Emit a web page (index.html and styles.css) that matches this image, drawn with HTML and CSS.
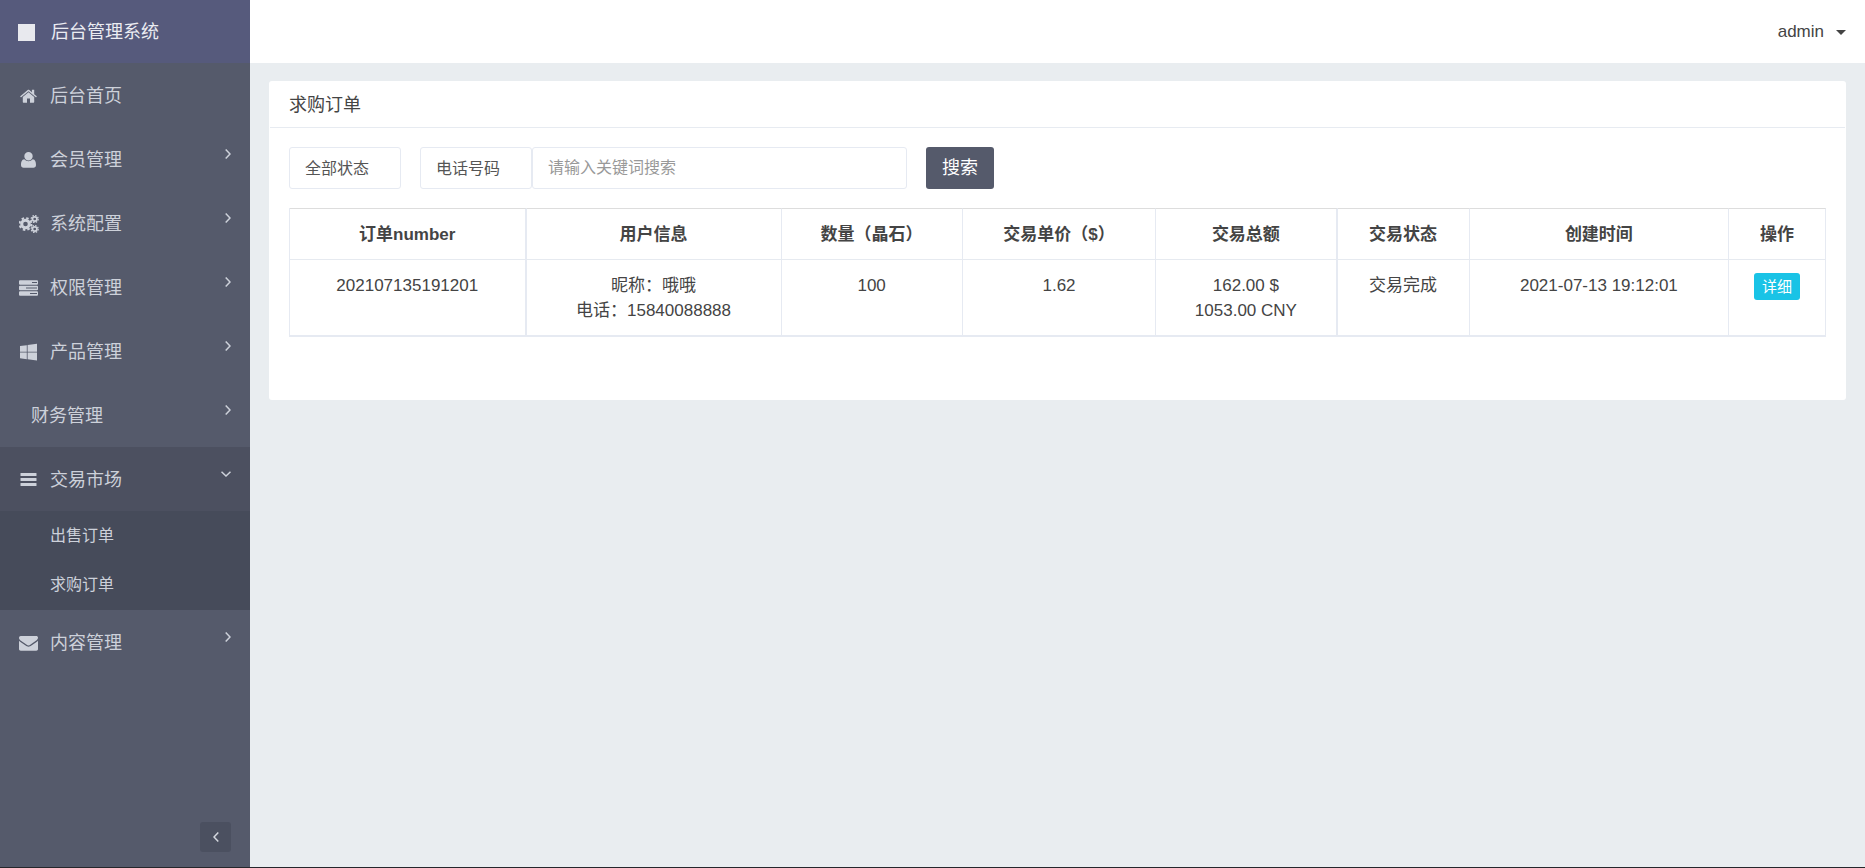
FILE: index.html
```html
<!DOCTYPE html>
<html lang="zh-CN">
<head>
<meta charset="utf-8">
<title>后台管理系统</title>
<link rel="stylesheet" href="styles.css">
</head>
<body>
<div class="app">
  <aside class="sidebar">
    <a class="brand" href="#"><span class="brand-mark"></span><span>后台管理系统</span></a>
    <nav class="nav">
      <a class="nav-item" href="#">
        <span class="nav-icon"><svg width="19" height="18" viewBox="0 0 19 18"><path d="M9.500 5.200 3.800 10v5.100c0 .3.300.6.600.6H8v-4.200h3v4.200h3.600c.3 0 .6-.3.6-.6V10z"/><path d="M17.700 9.300 15.200 7.200V3.100c0-.2-.1-.3-.3-.3h-1.700c-.2 0-.3.100-.3.300v2.100L10.300 3c-.4-.4-1.200-.4-1.600 0L1.300 9.300c-.1.100-.1.300 0 .4l.5.600c.1.100.3.100.4 0l7.300-6 7.300 6c.1.100.3.100.4 0l.5-.6c.1-.1.100-.3 0-.4z"/></svg></span>
        <span class="nav-text">后台首页</span>
      </a>
      <a class="nav-item" href="#">
        <span class="nav-icon"><svg width="19" height="18" viewBox="0 0 19 18"><path d="M9.500 1a4.200 4.200 0 0 1 4.200 4.200 4.200 4.200 0 0 1-8.400 0A4.200 4.200 0 0 1 9.500 1zM5.300 8.300A5.600 5.600 0 0 0 9.500 10.200a5.600 5.600 0 0 0 4.200-1.900c2.600.2 3.300 3 3.300 5.700 0 1.700-1.100 2.700-2.600 2.700H4.600C3.100 16.700 2 15.700 2 14c0-2.700.7-5.500 3.300-5.700z"/></svg></span>
        <span class="nav-text">会员管理</span>
        <svg class="chevron" width="6" height="10" viewBox="0 0 6 10"><path d="M.7.500 5 5 .7 9.500"/></svg>
      </a>
      <a class="nav-item" href="#">
        <span class="nav-icon"><svg class="gears" width="20" height="18" viewBox="0 0 20 18"><circle cx="6.500" cy="9" r="3.800" stroke-width="3"/><circle cx="6.500" cy="9" r="5.900" stroke-width="2" stroke-dasharray="2.500 2.134"/><circle cx="15.700" cy="4" r="2.200" stroke-width="1.700"/><circle cx="15.700" cy="4" r="3.500" stroke-width="1.200" stroke-dasharray="1.500 1.249"/><circle cx="15.700" cy="14" r="2.200" stroke-width="1.700"/><circle cx="15.700" cy="14" r="3.500" stroke-width="1.200" stroke-dasharray="1.500 1.249"/></svg></span>
        <span class="nav-text">系统配置</span>
        <svg class="chevron" width="6" height="10" viewBox="0 0 6 10"><path d="M.7.500 5 5 .7 9.500"/></svg>
      </a>
      <a class="nav-item" href="#">
        <span class="nav-icon"><svg width="19" height="18" viewBox="0 0 19 18"><path fill-rule="evenodd" d="M1 1.300h17a1 1 0 0 1 1 1v2.500a1 1 0 0 1-1 1H1a1 1 0 0 1-1-1V2.300a1 1 0 0 1 1-1zm12 1.700v1h5V3zM1 6.800h17a1 1 0 0 1 1 1v2.500a1 1 0 0 1-1 1H1a1 1 0 0 1-1-1V7.800a1 1 0 0 1 1-1zm6 1.700v1h11v-1zM1 12.300h17a1 1 0 0 1 1 1v2.500a1 1 0 0 1-1 1H1a1 1 0 0 1-1-1v-2.500a1 1 0 0 1 1-1zm10 1.700v1h7v-1z"/></svg></span>
        <span class="nav-text">权限管理</span>
        <svg class="chevron" width="6" height="10" viewBox="0 0 6 10"><path d="M.7.500 5 5 .7 9.500"/></svg>
      </a>
      <a class="nav-item" href="#">
        <span class="nav-icon"><svg width="19" height="18" viewBox="0 0 19 18"><path d="M1 3.100 7.800 2.200v6.600H1zM8.600 2.100 18 .8v8H8.600zM1 9.600h6.800v6.600L1 15.300zM8.600 9.600H18v8l-9.400-1.300z"/></svg></span>
        <span class="nav-text">产品管理</span>
        <svg class="chevron" width="6" height="10" viewBox="0 0 6 10"><path d="M.7.500 5 5 .7 9.500"/></svg>
      </a>
      <a class="nav-item" href="#">
        <span class="nav-icon nav-icon-empty"></span>
        <span class="nav-text">财务管理</span>
        <svg class="chevron" width="6" height="10" viewBox="0 0 6 10"><path d="M.7.500 5 5 .7 9.500"/></svg>
      </a>
      <a class="nav-item nav-item-open" href="#" aria-expanded="true">
        <span class="nav-icon"><svg width="19" height="18" viewBox="0 0 19 18"><rect x="1.500" y="2" width="16" height="3" rx=".6"/><rect x="1.500" y="7" width="16" height="3" rx=".6"/><rect x="1.500" y="12" width="16" height="3" rx=".6"/></svg></span>
        <span class="nav-text">交易市场</span>
        <svg class="chevron" width="10" height="6" viewBox="0 0 10 6"><path d="M.5.700 5 5 9.500.7"/></svg>
      </a>
      <div class="subnav">
        <a class="subnav-item" href="#">出售订单</a>
        <a class="subnav-item" href="#">求购订单</a>
      </div>
      <a class="nav-item" href="#">
        <span class="nav-icon"><svg width="19" height="18" viewBox="0 0 19 18"><path d="M1.700 2h15.600C18.200 2 19 2.700 19 3.700c0 1.100-.9 2.200-1.800 2.900l-5.600 3.900c-.7.500-1.400 1-2.100 1s-1.400-.5-2.100-1L1.900 6.700C1 6 0 4.900 0 3.900 0 2.800.7 2 1.700 2z"/><path d="M0 6.800c.3.400.7.700 1.100 1l5.500 3.700c.9.600 1.800 1.200 2.900 1.200s2-.6 2.900-1.200l5.500-3.700c.4-.3.800-.6 1.100-1V15c0 1-.8 1.700-1.700 1.700H1.700C.8 16.700 0 16 0 15z"/></svg></span>
        <span class="nav-text">内容管理</span>
        <svg class="chevron" width="6" height="10" viewBox="0 0 6 10"><path d="M.7.500 5 5 .7 9.500"/></svg>
      </a>
    </nav>
    <button class="collapse" type="button" aria-label="收起菜单"><svg class="collapse-icon" width="6" height="10" viewBox="0 0 6 10"><path d="M5.300.5 1 5 5.300 9.500"/></svg></button>
  </aside>
  <div class="main">
    <header class="topbar">
      <button class="user" type="button"><span>admin</span><span class="caret"></span></button>
    </header>
    <main class="content">
      <section class="panel">
        <h1 class="panel-title">求购订单</h1>
        <div class="panel-body">
          <form class="filters">
            <select class="field field-select" aria-label="状态"><option>全部状态</option></select>
            <div class="field-group">
              <select class="field field-select" aria-label="搜索类型"><option>电话号码</option></select>
              <input class="field field-input" type="text" placeholder="请输入关键词搜索" aria-label="关键词">
            </div>
            <button class="search" type="button">搜索</button>
          </form>
          <table class="orders">
            <colgroup>
              <col class="col-number"><col class="col-user"><col class="col-amount"><col class="col-price"><col class="col-amount"><col class="col-status"><col class="col-time"><col class="col-action">
            </colgroup>
            <thead>
              <tr><th class="divide">订单number</th><th>用户信息</th><th>数量（晶石）</th><th>交易单价（$）</th><th class="divide">交易总额</th><th>交易状态</th><th>创建时间</th><th>操作</th></tr>
            </thead>
            <tbody>
              <tr><td class="divide">202107135191201</td><td>昵称：哦哦<br>电话：15840088888</td><td>100</td><td>1.62</td><td class="divide">162.00 $<br>1053.00 CNY</td><td>交易完成</td><td>2021-07-13 19:12:01</td><td><a class="detail" href="#">详细</a></td></tr>
            </tbody>
          </table>
        </div>
      </section>
    </main>
  </div>
</div>
</body>
</html>
```

FILE: styles.css
```css
* {
  box-sizing: border-box;
}

body {
  margin: 0;
  color: #444;
  background: #e9edf0;
  font-family: "Liberation Sans", "Noto Sans CJK SC", sans-serif;
  font-size: 17px;
  line-height: 25px;
}

a {
  color: inherit;
  text-decoration: none;
}

button,
input,
select {
  font-family: inherit;
}

.app {
  display: flex;
  min-height: 100vh;
  border-bottom: 1px solid #25262b;
}

.sidebar {
  display: flex;
  flex: 0 0 250px;
  flex-direction: column;
  color: #cdd1da;
  background: #555a6b;
}

.brand {
  display: flex;
  align-items: center;
  gap: 16px;
  height: 63px;
  padding: 1px 0 0 18px;
  color: #ebecf2;
  background: #565a7c;
  font-size: 18px;
}

.brand-mark {
  width: 17px;
  height: 17px;
  background: #e8e9ee;
}

.nav-item {
  display: flex;
  align-items: center;
  height: 64px;
  padding: 2px 19px 0;
  font-size: 18px;
}

.nav-item-open {
  background: #4c5060;
}

.nav-icon {
  display: flex;
  width: 31px;
}

.nav-icon-empty {
  width: 12px;
}

.nav-icon svg {
  fill: #cdd1da;
}

.nav-icon .gears {
  fill: none;
  stroke: #cdd1da;
}

.nav-text {
  flex: 1;
}

.chevron {
  margin-bottom: 12px;
  fill: none;
  stroke: #cdd1da;
  stroke-width: 1.5;
}

.subnav {
  padding-bottom: 1px;
  background: #464b5a;
}

.subnav-item {
  display: block;
  padding: 12px 0 12px 50px;
  font-size: 16px;
}

.collapse {
  display: flex;
  align-items: center;
  justify-content: center;
  align-self: flex-end;
  width: 31px;
  height: 30px;
  margin: auto 19px 15px 0;
  padding: 0;
  border: 0;
  border-radius: 3px;
  background: #4b5060;
}

.collapse-icon {
  fill: none;
  stroke: #d4d7de;
  stroke-width: 1.5;
}

.main {
  flex: 1;
  min-width: 0;
}

.topbar {
  display: flex;
  align-items: center;
  justify-content: flex-end;
  height: 63px;
  padding-right: 19px;
  background: #fff;
}

.user {
  display: flex;
  align-items: center;
  gap: 12px;
  padding: 0;
  border: 0;
  color: #444;
  background: none;
  font-size: 17px;
}

.caret {
  margin-top: 2px;
  border: 5px solid transparent;
  border-top-color: #444;
  border-bottom: 0;
}

.content {
  padding: 18px 19px;
}

.panel {
  border-radius: 3px;
  background: #fff;
}

.panel-title {
  margin: 0 1px;
  padding: 12px 19px 9px;
  border-bottom: 1px solid #e7ebf1;
  font-size: 18px;
  font-weight: 400;
}

.panel-body {
  padding: 19px 20px 63px;
}

.filters {
  display: flex;
  gap: 19px;
  margin-bottom: 19px;
}

.field-group {
  display: flex;
}

.field {
  height: 42px;
  margin: 0;
  padding: 0 15px;
  border: 1px solid #e6eaf2;
  border-radius: 3px;
  color: #555;
  background: #fff;
  font-size: 16px;
}

.field-select {
  width: 112px;
  appearance: none;
}

.field-input {
  width: 375px;
}

.field-input::placeholder {
  color: #999;
}

.search {
  width: 68px;
  height: 42px;
  padding: 0 0 4px;
  border: 0;
  border-radius: 3px;
  color: #fff;
  background: #555a6b;
  font-size: 18px;
}

.orders {
  width: 100%;
  border-spacing: 0;
  border-left: 1px solid #e6eaf2;
  table-layout: fixed;
  text-align: center;
}

.col-number { width: 15.4%; }
.col-user { width: 16.6%; }
.col-amount { width: 11.8%; }
.col-price { width: 12.6%; }
.col-status { width: 8.6%; }
.col-time { width: 16.9%; }
.col-action { width: 6.3%; }

.orders th,
.orders td {
  padding: 13px 0 12px;
  border-right: 1px solid #e6eaf2;
  vertical-align: top;
}

.orders th {
  border-top: 1px solid #ddd;
  border-bottom: 1px solid #e6eaf0;
}

.orders td {
  border-bottom: 2px solid #e6eaf2;
}

.orders .divide {
  border-right-width: 2px;
}

.detail {
  display: inline-block;
  padding: 1px 8px;
  border-radius: 3px;
  color: #fff;
  background: #19c3e6;
  font-size: 15px;
}
```
